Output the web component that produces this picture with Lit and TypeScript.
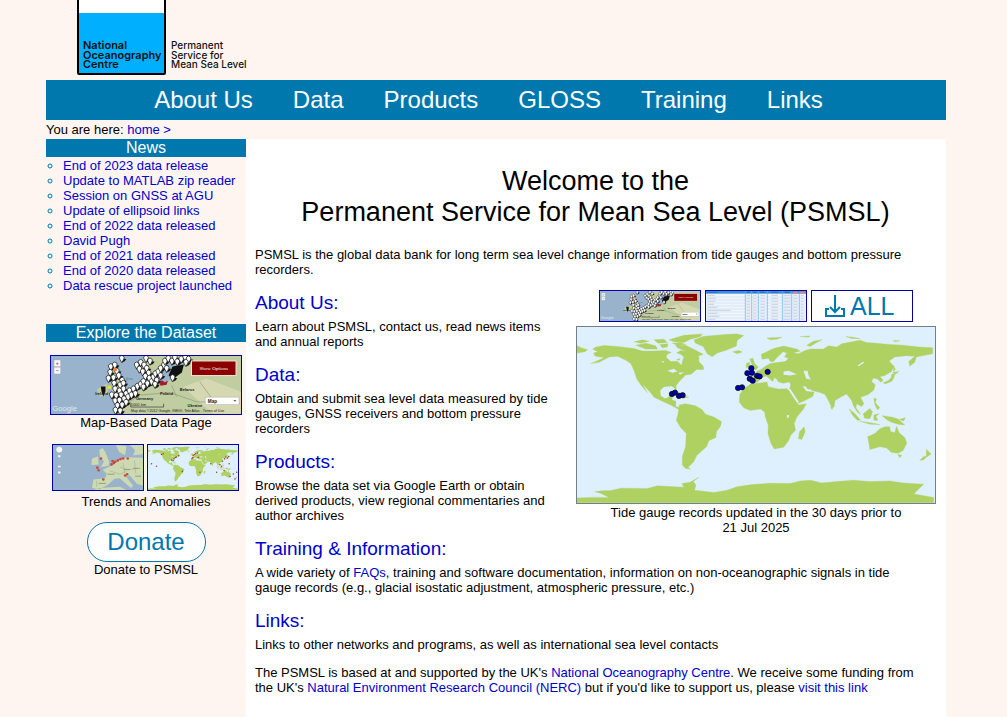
import { LitElement, html, svg, css } from "lit";
import { customElement } from "lit/decorators.js";

type Pt = [number, number];

const LAND: string[] = [
  // North and Central America
  "M65,84 L75,78 L100,73 L140,76 L190,82 L215,90 L250,90 L285,88 L302,94 L290,100 L286,108 L300,122 L320,121 L333,133 L336,118 L340,108 L330,100 L318,96 L330,88 L350,90 L366,92 L385,108 L385,122 L398,136 L400,146 L378,146 L362,160 L345,163 L330,178 L320,190 L316,196 L318,212 L312,202 L302,196 L280,198 L268,210 L270,226 L283,234 L292,232 L297,222 L309,222 L303,238 L316,242 L315,258 L328,262 L322,266 L300,254 L275,242 L250,230 L238,214 L215,190 L230,216 L212,195 L198,175 L190,150 L180,128 L165,118 L140,106 L115,108 L85,124 L60,128 L100,110 L72,105 L68,96 L80,92 Z",
  "M326,254 L345,250 L375,256 L395,268 L405,282 L430,290 L453,304 L450,318 L438,335 L436,352 L415,362 L408,380 L390,396 L378,408 L370,425 L360,436 L352,442 L360,448 L345,446 L335,436 L335,410 L345,380 L347,340 L330,322 L317,300 L322,282 Z",
  // Greenland, Iceland, Arctic islands
  "M370,56 L400,45 L440,42 L470,39 L500,38 L520,43 L500,58 L498,75 L465,88 L440,96 L425,107 L410,98 L398,76 L375,66 Z",
  "M487,92 L505,88 L516,93 L500,98 Z",
  "M295,56 L340,42 L395,38 L390,46 L360,54 L340,64 L310,62 Z",
  "M315,72 L345,72 L372,86 L398,100 L382,106 L365,94 L335,86 L320,80 Z",
  "M195,72 L225,66 L255,74 L260,84 L225,84 Z M190,62 L215,56 L235,60 L210,66 Z M250,56 L280,54 L290,64 L262,66 Z M268,70 L292,68 L290,78 L274,80 Z M305,66 L330,64 L345,70 L320,72 Z",
  "M18,74 L30,80 L50,86 L42,92 L18,96 Z M318,116 L328,112 L326,118 Z",
  // Cuba and Hispaniola
  "M300,216 L322,214 L340,226 L355,230 L338,233 L318,220 Z",
  // Africa and Madagascar
  "M520,205 L540,190 L575,186 L590,184 L594,198 L625,205 L650,204 L656,210 L672,235 L686,254 L708,250 L700,266 L680,290 L672,310 L676,330 L662,345 L655,362 L640,382 L612,387 L602,370 L593,340 L594,315 L585,290 L583,275 L570,266 L540,270 L520,262 L507,245 L508,222 Z",
  "M702,320 L705,335 L695,358 L685,356 L688,335 Z",
  // Europe and Asia
  "M542,185 L541,168 L560,166 L558,152 L572,146 L585,136 L600,128 L620,125 L645,122 L655,112 L643,108 L650,96 L638,92 L618,112 L610,122 L600,122 L595,112 L575,115 L573,100 L610,82 L640,75 L680,84 L690,90 L670,95 L685,98 L705,88 L720,84 L760,84 L775,74 L800,78 L815,68 L870,57 L890,64 L920,66 L960,70 L1000,72 L1050,78 L1089,80 L1089,98 L1065,103 L1040,108 L1035,124 L1020,136 L1017,122 L1035,106 L1010,104 L975,108 L958,120 L972,136 L965,152 L945,164 L930,168 L940,178 L933,185 L923,175 L910,172 L905,182 L916,192 L912,208 L895,222 L872,230 L882,250 L875,258 L860,250 L858,262 L872,282 L862,275 L850,255 L845,240 L830,220 L815,228 L795,240 L792,260 L785,262 L775,240 L765,222 L750,216 L735,212 L710,204 L695,194 L708,212 L732,214 L728,228 L700,242 L685,248 L670,222 L658,205 L662,190 L655,184 L640,188 L625,184 L620,176 L612,170 L608,182 L600,176 L588,166 L575,170 L562,184 L550,187 Z",
  "M538,114 L548,112 L553,128 L564,138 L558,146 L542,148 L547,135 Z M528,128 L538,124 L538,138 L527,140 Z",
  "M590,50 L635,48 L620,54 L600,56 Z M710,72 L730,60 L756,56 L740,64 L720,76 Z M690,46 L720,44 L715,48 Z M828,46 L850,48 L870,52 L845,52 Z M970,58 L990,59 L975,62 Z",
  // East Asian islands
  "M976,156 L972,172 L965,182 L945,190 L940,186 L955,180 L964,170 L966,160 Z M968,154 L988,152 L976,160 Z M971,134 L977,146 L971,152 Z",
  "M838,266 L855,280 L872,300 L862,300 L848,285 Z M870,303 L905,308 L930,313 L900,312 Z M880,280 L900,264 L908,275 L900,295 L884,294 Z M912,284 L928,280 L918,288 L924,300 L912,300 Z M912,232 L920,236 L916,246 L930,262 L922,268 L914,250 Z M782,260 L788,262 L786,268 Z",
  "M937,286 L965,290 L985,296 L1005,314 L985,312 L965,306 L950,298 Z M988,298 L1006,292 L1002,302 Z",
  // Oceania
  "M893,350 L915,340 L930,326 L945,320 L960,320 L962,334 L975,338 L980,318 L988,338 L1005,352 L1011,370 L1000,392 L985,400 L965,398 L950,384 L930,380 L900,389 L897,370 Z M984,404 L996,406 L990,414 Z",
  "M1070,388 L1084,402 L1070,412 Z M1050,422 L1062,410 L1074,408 L1062,420 Z",
  // Antarctica
  "M18,536 L60,534 L115,534 L90,522 L72,517 L92,514 L120,513 L150,506 L230,507 L260,499 L340,503 L334,492 L358,488 L385,473 L368,486 L376,496 L372,512 L430,519 L470,512 L500,502 L545,495 L600,491 L660,492 L690,484 L722,482 L755,490 L800,486 L850,482 L900,486 L960,484 L1000,490 L1062,494 L1040,515 L1033,524 L1092,534 L1092,550 L18,550 Z",
];

const WATER =
  "M640,152 L655,150 L680,160 L660,164 L640,162 Z M700,150 L712,150 L716,166 L722,176 L708,174 Z M650,284 L656,284 L656,292 L650,292 Z M290,150 L310,144 L320,152 L306,156 Z M324,156 L340,154 L328,162 Z M863,134 L880,122 L882,126 L866,136 Z M272,122 L280,120 L278,126 Z";

const GAUGES: Pt[] = [
  [304, 220], [313, 216], [325, 226], [336, 224], [503, 202], [515, 200], [543, 142],
  [531, 157], [545, 156], [538, 174], [547, 180], [560, 165], [568, 167], [592, 153],
];

const ANOMALIES: Pt[] = [
  [330, 180], [345, 165], [320, 200], [360, 160], [385, 146], [300, 196], [180, 130], [560, 140], [575, 130],
  [590, 122], [610, 112], [555, 165], [545, 180], [620, 165], [950, 160], [970, 170], [935, 180], [985, 155],
  [910, 210], [880, 250], [900, 270], [990, 240], [1040, 360], [1000, 390], [1060, 420], [930, 320], [430, 330],
  [60, 240], [120, 270], [200, 120], [640, 340], [770, 240], [1080, 340], [840, 340],
];

const world = (marks: Pt[], kind: string, r: number) => svg`
  <rect x="18" y="17" width="1078" height="534" fill="#deeffe"></rect>
  <path d=${LAND.join(" ")} fill="#aed162" stroke="#aed162" stroke-width="1"></path>
  <path d=${WATER} fill="#deeffe"></path>
  <path d="M658,206 L684,246 M702,197 L712,208 L724,210" fill="none" stroke="#deeffe" stroke-width="5"></path>
  ${marks.map(([x, y]) => svg`<circle class=${kind} cx=${x} cy=${y} r=${r}></circle>`)}`;

const PINS: Pt[] = [
  [245, 130], [212, 155], [224, 150], [210, 172], [230, 168], [205, 190], [220, 188], [236, 182], [246, 196],
  [222, 205], [240, 210], [250, 205], [225, 222], [238, 228], [250, 222], [215, 240], [228, 242], [243, 240],
  [258, 236], [268, 228], [280, 222], [292, 214], [302, 208], [225, 258], [238, 256], [252, 252], [264, 246],
  [274, 240], [232, 272], [246, 270], [258, 262], [226, 286], [240, 288], [290, 150], [302, 142], [312, 150],
  [298, 162], [308, 170], [320, 160], [326, 174], [316, 184], [328, 190], [310, 200], [322, 206], [335, 200],
  [340, 186], [346, 176], [355, 170], [362, 182], [350, 196], [362, 160], [372, 150], [380, 160], [375, 138],
  [385, 130], [396, 138], [405, 128], [412, 140], [424, 132], [436, 126], [446, 132], [398, 188], [318, 130],
  [330, 138], [438, 142], [286, 236], [310, 216], [345, 208],
];

const pinMap = () => svg`
  <rect x="32" y="122" width="572" height="175" fill="#99b3cc"></rect>
  <path d="M315,122 L604,122 L604,297 L228,297 L250,262 L300,222 L360,206 L405,190 L425,160 L445,140 L400,130 L365,165 L340,180 L300,150 Z" fill="#c0cda0"></path>
  <path d="M205,150 L230,150 L238,200 L252,235 L210,245 L222,210 Z M170,222 L200,205 L205,235 L180,245 Z" fill="#c0cda0"></path>
  <path d="M430,215 L500,190 L604,230 L604,297 L520,297 Z" fill="#d6d8b2"></path>
  <path d="M265,262 L300,240 L390,232 L470,260 L600,265 M395,210 L410,245 M480,200 L520,255" fill="none" stroke="#8f967b" stroke-width="2"></path>
  ${PINS.map(([x, y]) => svg`<path d="M${x},${y + 12} l7,-12 l7,1 l-5,7 z" fill="#151515"></path>`)}
  <path d="M386,180 l12,-26 l34,-6 l-6,24 l-28,20 z M182,214 h14 v14 l-6,16 l-6,-16 z" fill="#111"></path>
  ${PINS.map(([x, y]) => svg`<path d="M${x},${y + 12} L${x - 6},${y + 1} A7,7 0 1 1 ${x + 6},${y + 1} Z" fill="#fff" stroke="#000" stroke-width="2"></path>`)}
  <path d="M358,203 l8,-8 l8,6 l10,-4 l-4,12 l-18,3 z" fill="#a51d2d"></path>
  <circle cx="225" cy="163" r="6" fill="#f08030"></circle>
  <circle cx="208" cy="216" r="6" fill="#e8df28"></circle>
  <g font-family="Liberation Sans, sans-serif" font-size="12" fill="#222">
    <text x="165" y="239" font-weight="bold">Ireland</text>
    <text x="257" y="193" fill="#5578a0">Sea</text>
    <text x="288" y="255" font-weight="bold">Germany</text>
    <text x="360" y="240" font-weight="bold">Poland</text>
    <text x="420" y="229" font-weight="bold">Belarus</text>
    <text x="443" y="276" font-weight="bold">Ukraine</text>
    <text x="272" y="272">1000 km</text>
    <text x="272" y="291" font-size="11">Map data ©2012 Google, INEGI, Tele Atlas - Terms of Use</text>
    <text x="36" y="287" font-size="23" fill="#dfe8f2">Google</text>
  </g>
  <path d="M272,266 v10 h99 v-10" fill="none" stroke="#333" stroke-width="2"></path>
  <rect x="41" y="134" width="20" height="42" rx="2" fill="#f7f7f7" stroke="#8a99a8"></rect>
  <path d="M41,155 h20 M47,145 h8 M51,141 v8 M47,166 h8" stroke="#777" stroke-width="2"></path>
  <rect x="455" y="137" width="134" height="44" fill="#8b0000" stroke="#f4e4e0" stroke-width="3"></rect>
  <text x="522" y="164" text-anchor="middle" font-family="Liberation Serif, serif" font-size="15" fill="#fff">Show Options</text>
  <rect x="496" y="246" width="102" height="23" fill="#fff" stroke="#888"></rect>
  <text x="504" y="263" font-family="Liberation Sans, sans-serif" font-weight="bold" font-size="14" fill="#222">Map</text>
  <path d="M581,255 h9 l-4,5 z" fill="#555"></path>`;

const EUROPE_DOTS: Pt[] = [
  [183, 70], [215, 88], [222, 84], [226, 80], [234, 76], [242, 72], [250, 70], [218, 78],
  [264, 70], [256, 122], [262, 118], [172, 98], [176, 106], [190, 134],
];

const europe = () => svg`
  <rect x="38" y="29" width="272" height="137" fill="#99b3cc"></rect>
  <path d="M178,44 L188,38 L196,50 L208,80 L206,92 L182,96 L192,80 L180,64 Z M156,70 L174,64 L176,88 L154,90 Z" fill="#cdd9b0"></path>
  <path d="M310,68 L262,66 L244,72 L214,92 L188,104 L200,116 L196,130 L160,134 L156,160 L178,164 L204,150 L224,132 L240,130 L262,150 L274,160 L280,152 L258,124 L270,122 L292,148 L310,152 Z M228,29 L260,32 L256,60 L238,50 Z M270,29 h40 v28 l-30,4 l6,-16 z M160,166 l20,-6 l60,-4 l20,10 z" fill="#cdd9b0"></path>
  <path d="M210,108 l30,10 l20,-8 M240,96 l24,8 l30,-4 M250,84 l4,28 M284,76 l4,40 M170,138 v18" fill="none" stroke="#aab494" stroke-width="2"></path>
  <path d="M202,118 h22 M252,104 h18 M280,100 h20 M176,146 h22 M286,124 h18" stroke="#7c836e" stroke-width="2"></path>
  ${EUROPE_DOTS.map(([x, y]) => svg`<circle cx=${x} cy=${y} r="4" fill="#c84a3c"></circle>`)}
  <circle cx="57" cy="43" r="9" fill="#f4f6f8"></circle>
  <path d="M53,60 h8 v6 h-8 z M53,92 h8 v5 h-8 z M53,110 h8 v6 h-8 z" fill="#eef2f6"></path>`;

const COLS = [118, 137, 157, 184, 229, 257, 280];
const ROWS = [10, 19, 28, 37, 46, 55, 64, 73, 82];
const sheet = () => svg`
  <rect width="300" height="90" fill="#f0f5fc"></rect>
  <rect width="300" height="8" fill="#3a8fd8"></rect>
  <path d="M260,4 h16 M282,4 h16" stroke="#e88080" stroke-width="5"></path>
  <path d="M4,4 h30 M122,4 h10 M142,4 h10 M163,4 h12 M196,4 h20 M236,4 h14" stroke="#1c62aa" stroke-width="2"></path>
  ${ROWS.map((y, i) => svg`
    <path d="M0,${y + 8} h300" stroke="#a3c6ec" stroke-width="1"></path>
    <path d="M4,${y + 3} h${[22, 26, 24, 20, 30, 70, 30, 36, 24][i]} M122,${y + 3} h10 M142,${y + 3} h9 M163,${y + 3} h14 M196,${y + 3} h20 M232,${y + 3} h22 M262,${y + 3} h12 M284,${y + 3} h9" stroke="#b4c0d2" stroke-width="2"></path>`)}
  <path d=${COLS.map((x) => `M${x},0 v90`).join(" ")} stroke="#5cb8e6" stroke-width="2"></path>`;

const NAV = ["About Us", "Data", "Products", "GLOSS", "Training", "Links"];
const NEWS = [
  "End of 2023 data release",
  "Update to MATLAB zip reader",
  "Session on GNSS at AGU",
  "Update of ellipsoid links",
  "End of 2022 data released",
  "David Pugh",
  "End of 2021 data released",
  "End of 2020 data released",
  "Data rescue project launched",
];

@customElement("app-root")
export class AppRoot extends LitElement {
  static styles = css`
    :host {
      display: block;
      box-sizing: border-box;
      min-height: 100vh;
      padding-right: 15px;
      background: #fff5f0;
      color: #000;
      font: 13px/15px "Liberation Sans", Arial, sans-serif;
      --brand: #0078ae;
      --link: #0000cc;
    }
    * { box-sizing: border-box; }
    a { color: var(--link); text-decoration: none; }
    a:hover { text-decoration: underline; }
    svg { display: block; width: 100%; height: 100%; }
    .page { display: flex; flex-direction: column; max-width: 900px; min-height: 100vh; margin: 0 auto; }
    .masthead { height: 80px; padding-left: 31px; }
    .logo { display: block; width: 180px; height: 75px; }
    .nav { padding-right: 15px; background: var(--brand); }
    .nav ul { display: flex; flex-wrap: wrap; justify-content: center; gap: 0 40px; margin: 0; padding: 0; list-style: none; }
    .nav a { display: block; color: #fff; font-size: 24px; line-height: 40px; }
    .crumbs { line-height: 19px; }
    .columns { display: flex; flex: 1; }
    .side { flex: 0 0 200px; text-align: center; }
    .side h2 { margin: 0; background: var(--brand); color: #fff; font-size: 16px; line-height: 18px; font-weight: normal; }
    .news { margin: 1px 0 31px; padding-left: 17px; list-style: circle; text-align: left; white-space: nowrap; }
    .news li::marker { color: var(--brand); }
    .thumb { display: block; overflow: hidden; border: 1px solid #0000aa; }
    .thumb.wide { height: 60px; margin: 13px 4px 0; }
    .pair { display: flex; gap: 3px; margin: 14px 7px 3px 6px; }
    .pair .thumb { flex: 1; height: 47px; }
    .side p { margin: 0; }
    .donate {
      display: block; width: 119px; height: 40px; margin: 13px auto 0; padding: 0;
      border: 1px solid var(--brand); border-radius: 20px; background: #fff;
      color: var(--brand); font-family: inherit; font-size: 24px; line-height: 38px;
    }
    .main { flex: 1; min-width: 0; padding: 27px 10px 22px 9px; background: #fff; }
    h1 { margin: 0 0 19px; font-size: 27px; line-height: 31px; font-weight: normal; text-align: center; }
    .main p { margin: 0; }
    .main h2 { margin: 15px 0 5px; font-size: 19px; line-height: 22px; font-weight: normal; }
    .main .funding { margin-top: 13px; }
    .recent { float: right; width: 360px; margin: 13px 0 0 16px; text-align: center; }
    .tools { display: flex; justify-content: center; gap: 4px; margin-bottom: 4px; }
    .tools .thumb { width: 102px; height: 32px; }
    .tools .all { display: flex; align-items: center; padding-left: 12px; gap: 4px; color: var(--brand); font-size: 25px; line-height: 30px; }
    .all svg { width: 22px; height: 24px; }
    .map { display: block; height: 178px; margin-bottom: 1px; border: 1px solid #73808a; }
    .gauge { fill: #0000a8; stroke: #000; stroke-width: 2; }
    .anomaly { fill: #a83c32; }
  `;

  render() {
    return html`
      <div class="page">
        <header class="masthead">
          <a class="logo" href="#" aria-label="National Oceanography Centre, Permanent Service for Mean Sea Level">
            <svg viewBox="0 0 180 75">
              <rect x="1" y="-3" width="87" height="77" rx="1" fill="#fff" stroke="#000" stroke-width="2"></rect>
              <rect x="2" y="13" width="85" height="60" fill="#00b0ff"></rect>
              <g font-family="Inter, sans-serif" font-size="11" fill="#111">
                <g font-weight="600">
                  <text x="6" y="49">National</text>
                  <text x="6" y="59">Oceanography</text>
                  <text x="6" y="68">Centre</text>
                </g>
                <g font-size="10" font-weight="500">
                  <text x="94" y="49">Permanent</text>
                  <text x="94" y="59">Service for</text>
                  <text x="94" y="68">Mean Sea Level</text>
                </g>
              </g>
            </svg>
          </a>
        </header>
        <nav class="nav" aria-label="Main">
          <ul>${NAV.map((n) => html`<li><a href="#">${n}</a></li>`)}</ul>
        </nav>
        <div class="crumbs">You are here: <a href="#">home &gt;</a></div>
        <div class="columns">
          <aside class="side">
            <h2>News</h2>
            <ul class="news">${NEWS.map((n) => html`<li><a href="#">${n}</a></li>`)}</ul>
            <h2>Explore the Dataset</h2>
            <a class="thumb wide" href="#" aria-label="Map-Based Data Page">
              <svg viewBox="32 122 572 175" preserveAspectRatio="none">${pinMap()}</svg>
            </a>
            <p>Map-Based Data Page</p>
            <div class="pair">
              <a class="thumb" href="#" aria-label="Trends">
                <svg viewBox="38 29 272 137" preserveAspectRatio="none">${europe()}</svg>
              </a>
              <a class="thumb" href="#" aria-label="Anomalies">
                <svg viewBox="18 17 1078 534" preserveAspectRatio="none">${world(ANOMALIES, "anomaly", 9)}</svg>
              </a>
            </div>
            <p>Trends and Anomalies</p>
            <button class="donate" type="button">Donate</button>
            <p>Donate to PSMSL</p>
          </aside>
          <main class="main">
            <h1>Welcome to the<br />Permanent Service for Mean Sea Level (PSMSL)</h1>
            <p>PSMSL is the global data bank for long term sea level change information from tide gauges and bottom pressure recorders.</p>
            <div class="recent">
              <div class="tools">
                <a class="thumb" href="#" aria-label="Data map">
                  <svg viewBox="32 122 572 175" preserveAspectRatio="none">${pinMap()}</svg>
                </a>
                <a class="thumb" href="#" aria-label="Data table">
                  <svg viewBox="0 0 300 90" preserveAspectRatio="none">${sheet()}</svg>
                </a>
                <a class="thumb all" href="#">
                  <svg viewBox="0 0 22 24" fill="none" stroke="currentColor" stroke-width="2" aria-hidden="true">
                    <path d="M11,1 V18 M6,13 L11,18 L16,13 M5,15 H2 V22 H20 V15 H17"></path>
                  </svg>ALL
                </a>
              </div>
              <a class="map" href="#" aria-label="World map of recently updated tide gauges">
                <svg viewBox="18 17 1078 534" preserveAspectRatio="none">${world(GAUGES, "gauge", 8)}</svg>
              </a>
              <p>Tide gauge records updated in the 30 days prior to<br />21 Jul 2025</p>
            </div>
            <h2><a href="#">About Us:</a></h2>
            <p>Learn about PSMSL, contact us, read news items and annual reports</p>
            <h2><a href="#">Data:</a></h2>
            <p>Obtain and submit sea level data measured by tide gauges, GNSS receivers and bottom pressure recorders</p>
            <h2><a href="#">Products:</a></h2>
            <p>Browse the data set via Google Earth or obtain derived products, view regional commentaries and author archives</p>
            <h2><a href="#">Training &amp; Information:</a></h2>
            <p>A wide variety of <a href="#">FAQs</a>, training and software documentation, information on non-oceanographic signals in tide<br />gauge records (e.g., glacial isostatic adjustment, atmospheric pressure, etc.)</p>
            <h2><a href="#">Links:</a></h2>
            <p>Links to other networks and programs, as well as international sea level contacts</p>
            <p class="funding">The PSMSL is based at and supported by the UK's <a href="#">National Oceanography Centre</a>. We receive some funding from<br />the UK's <a href="#">Natural Environment Research Council (NERC)</a> but if you'd like to support us, please <a href="#">visit this link</a></p>
          </main>
        </div>
      </div>
    `;
  }
}
